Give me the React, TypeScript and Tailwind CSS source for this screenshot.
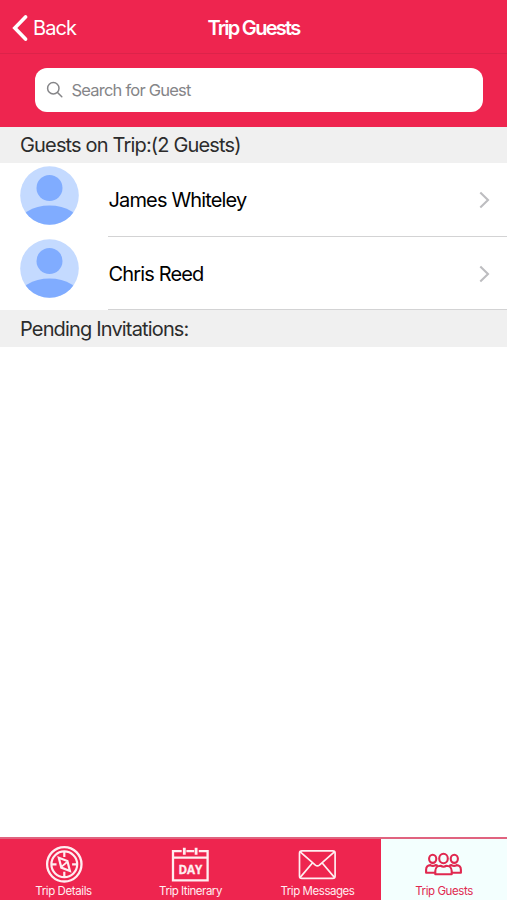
import React from 'react';
import clsx from 'clsx';

const guests = ['James Whiteley', 'Chris Reed'];

function CompassIcon() {
  return (
    <svg className="h-10 w-10" viewBox="0.5 0 40 40" fill="none" stroke="currentColor">
      <circle cx="20.8" cy="20.3" r="17.2" strokeWidth="2.3" />
      <circle cx="20.8" cy="20.3" r="12.9" strokeWidth="2.2" />
      <path d="M20.8 8v5M20.8 27.8V33M8 20.3h5M28.6 20.3h5" strokeWidth="2.2" />
      <path d="M15.3 13.8l8.6 3.2 2.5 10-8.6-3.4z" strokeWidth="2.2" />
      <path d="M18.2 22.6l5.4-4.6" strokeWidth="1.8" />
    </svg>
  );
}

function CalendarIcon() {
  return (
    <svg className="h-10 w-10" viewBox="0.8 0 40 40" fill="none" stroke="currentColor" strokeWidth="2.3">
      <path d="M11.5 7.2H2.8v29.2h34.6V7.2h-8.8M16.2 7.2h7.8M2.8 13.6h34.6" />
      <path d="M14.1 3.8v7M25.9 3.8v7" strokeWidth="2.8" />
      <text
        x="20.2"
        y="29.5"
        textAnchor="middle"
        textLength="24"
        lengthAdjust="spacingAndGlyphs"
        fill="currentColor"
        stroke="currentColor"
        strokeWidth="0.3"
        fontFamily="'Open Sans', sans-serif"
        fontSize="13"
        fontWeight="700"
        letterSpacing="0"
      >
        DAY
      </text>
    </svg>
  );
}

function EnvelopeIcon() {
  return (
    <svg className="h-10 w-10" viewBox="0.8 0 40 40" fill="none" stroke="currentColor" strokeWidth="1.7" strokeLinejoin="round">
      <rect x="2.3" y="6.9" width="35.6" height="27.4" rx="2.4" />
      <path d="M3 7.9l15.2 13.2q2 1.5 4 0L37.2 7.9M3 33.4l12.2-14.4M37.2 33.4L25 19" />
    </svg>
  );
}

function PeopleIcon() {
  return (
    <svg className="h-10 w-10" viewBox="0.3 0 40 40" fill="none" stroke="currentColor" strokeWidth="2.1" strokeLinejoin="round">
      <ellipse cx="19.8" cy="14.5" rx="4.3" ry="4.8" />
      <ellipse cx="9" cy="14.8" rx="3.6" ry="4.1" />
      <ellipse cx="30.6" cy="14.8" rx="3.6" ry="4.1" />
      <path d="M11.6 30.3v-3.2c0-3.6 2.8-5.4 5.2-5.4 1.8 1.2 4.2 1.2 6 0 2.4 0 5.2 1.8 5.2 5.4v3.2z" />
      <path d="M11.6 28.8H2.4v-3c0-3 2-4.7 4.2-4.7 1.6 1 3.6 1 5.2 0 .9.1 1.6.4 2.2.9M28 28.8h9.2v-3c0-3-2-4.7-4.2-4.7-1.6 1-3.6 1-5.2 0-.9.1-1.6.4-2.2.9" />
    </svg>
  );
}

const tabs = [
  { label: 'Trip Details', icon: <CompassIcon />, tracking: 'tracking-[-0.4px]' },
  { label: 'Trip Itinerary', icon: <CalendarIcon />, tracking: 'tracking-[-0.47px]' },
  { label: 'Trip Messages', icon: <EnvelopeIcon />, tracking: 'tracking-[-0.45px]' },
  { label: 'Trip Guests', icon: <PeopleIcon />, tracking: 'tracking-[-0.42px]', active: true },
];

function Avatar() {
  return (
    <svg className="mt-[2.5px] h-[59px] w-[59px] shrink-0" viewBox="0 0 59 59">
      <clipPath id="avatar-clip">
        <circle cx="29.5" cy="29.5" r="29.3" />
      </clipPath>
      <g clipPath="url(#avatar-clip)">
        <rect width="59" height="59" fill="#c4daff" />
        <circle cx="29.5" cy="22" r="13" fill="#80acff" />
        <ellipse cx="29.5" cy="59" rx="31" ry="19.5" fill="#80acff" />
      </g>
    </svg>
  );
}

function GuestRow({ name }: { name: string }) {
  return (
    <li className="flex h-[73.5px] pl-[20.4px]">
      <Avatar />
      <div className="ml-[29.1px] flex flex-1 items-center justify-between border-b-[1.5px] border-[#d3d3d4] pt-[2px] pr-[17px]">
        <span className="text-[20px] tracking-[-0.85px] text-black">{name}</span>
        <svg className="h-[18px] w-[11px]" viewBox="0 0 11 18" fill="none" stroke="#bdbdc0" strokeWidth="2.1">
          <path d="M1.3 1.5L9 9l-7.7 7.5" />
        </svg>
      </div>
    </li>
  );
}

function SectionHeader({ children }: { children: React.ReactNode }) {
  return (
    <h2 className="flex h-[36.5px] items-center bg-[#f0f0f0] pt-[1px] pl-[20px] text-[20px] tracking-[-0.84px] text-[#2c2c2c]">
      {children}
    </h2>
  );
}

export default function App() {
  return (
    <div className="flex h-screen flex-col overflow-hidden bg-white font-[Inter,sans-serif]">
      {/* Navigation bar */}
      <header className="grid h-[54px] shrink-0 grid-cols-3 items-center border-b border-[#dc234a] bg-[#ee254f] pt-[3px] text-white">
        <button className="flex items-center pl-3">
          <svg className="h-7 w-4" viewBox="0 0 16 28" fill="none" stroke="currentColor" strokeWidth="3.6" strokeLinecap="round">
            <path d="M13.5 2.9L2.8 14l10.7 11.1" />
          </svg>
          <span className="ml-[5px] text-[20px] tracking-[-0.9px]">Back</span>
        </button>
        <h1 className="text-center text-[20px] font-semibold tracking-[-1.7px]">Trip Guests</h1>
      </header>

      {/* Search */}
      <div className="h-[72.5px] shrink-0 bg-[#ee254f] pt-[14px] pr-[24.5px] pl-[35px]">
        <div className="flex h-[44px] items-center rounded-[12px] bg-white pl-[11px]">
          <svg className="h-[18px] w-[18px]" viewBox="0 0 18 18" fill="none" stroke="#858588" strokeWidth="1.5" strokeLinecap="round">
            <circle cx="7.3" cy="7.3" r="5.7" />
            <path d="M11.5 11.5l4.3 4.3" />
          </svg>
          <input
            className="ml-[7.5px] min-w-0 flex-1 text-[16.5px] tracking-[-0.78px] outline-none placeholder:text-[#858588]"
            placeholder="Search for Guest"
          />
        </div>
      </div>

      <main className="flex-1">
        <SectionHeader>Guests on Trip:({guests.length} Guests)</SectionHeader>
        <ul>
          {guests.map((name) => (
            <GuestRow key={name} name={name} />
          ))}
        </ul>
        <SectionHeader>Pending Invitations:</SectionHeader>
      </main>

      {/* Tab bar */}
      <nav className="grid h-[63px] shrink-0 grid-cols-[127px_127px_127px_1fr] border-t-2 border-[#e0637f] bg-[#ee254f]">
        {tabs.map((tab) => (
          <button
            key={tab.label}
            className={clsx(
              'flex flex-col items-center pt-[5px]',
              tab.active ? 'bg-[#f3fffe] text-[#e0284f]' : 'text-[#ffeef1]'
            )}
          >
            {tab.icon}
            <span className={clsx('mt-[-1px] text-[11.5px] leading-[16px] whitespace-nowrap', tab.tracking)}>{tab.label}</span>
          </button>
        ))}
      </nav>
    </div>
  );
}
